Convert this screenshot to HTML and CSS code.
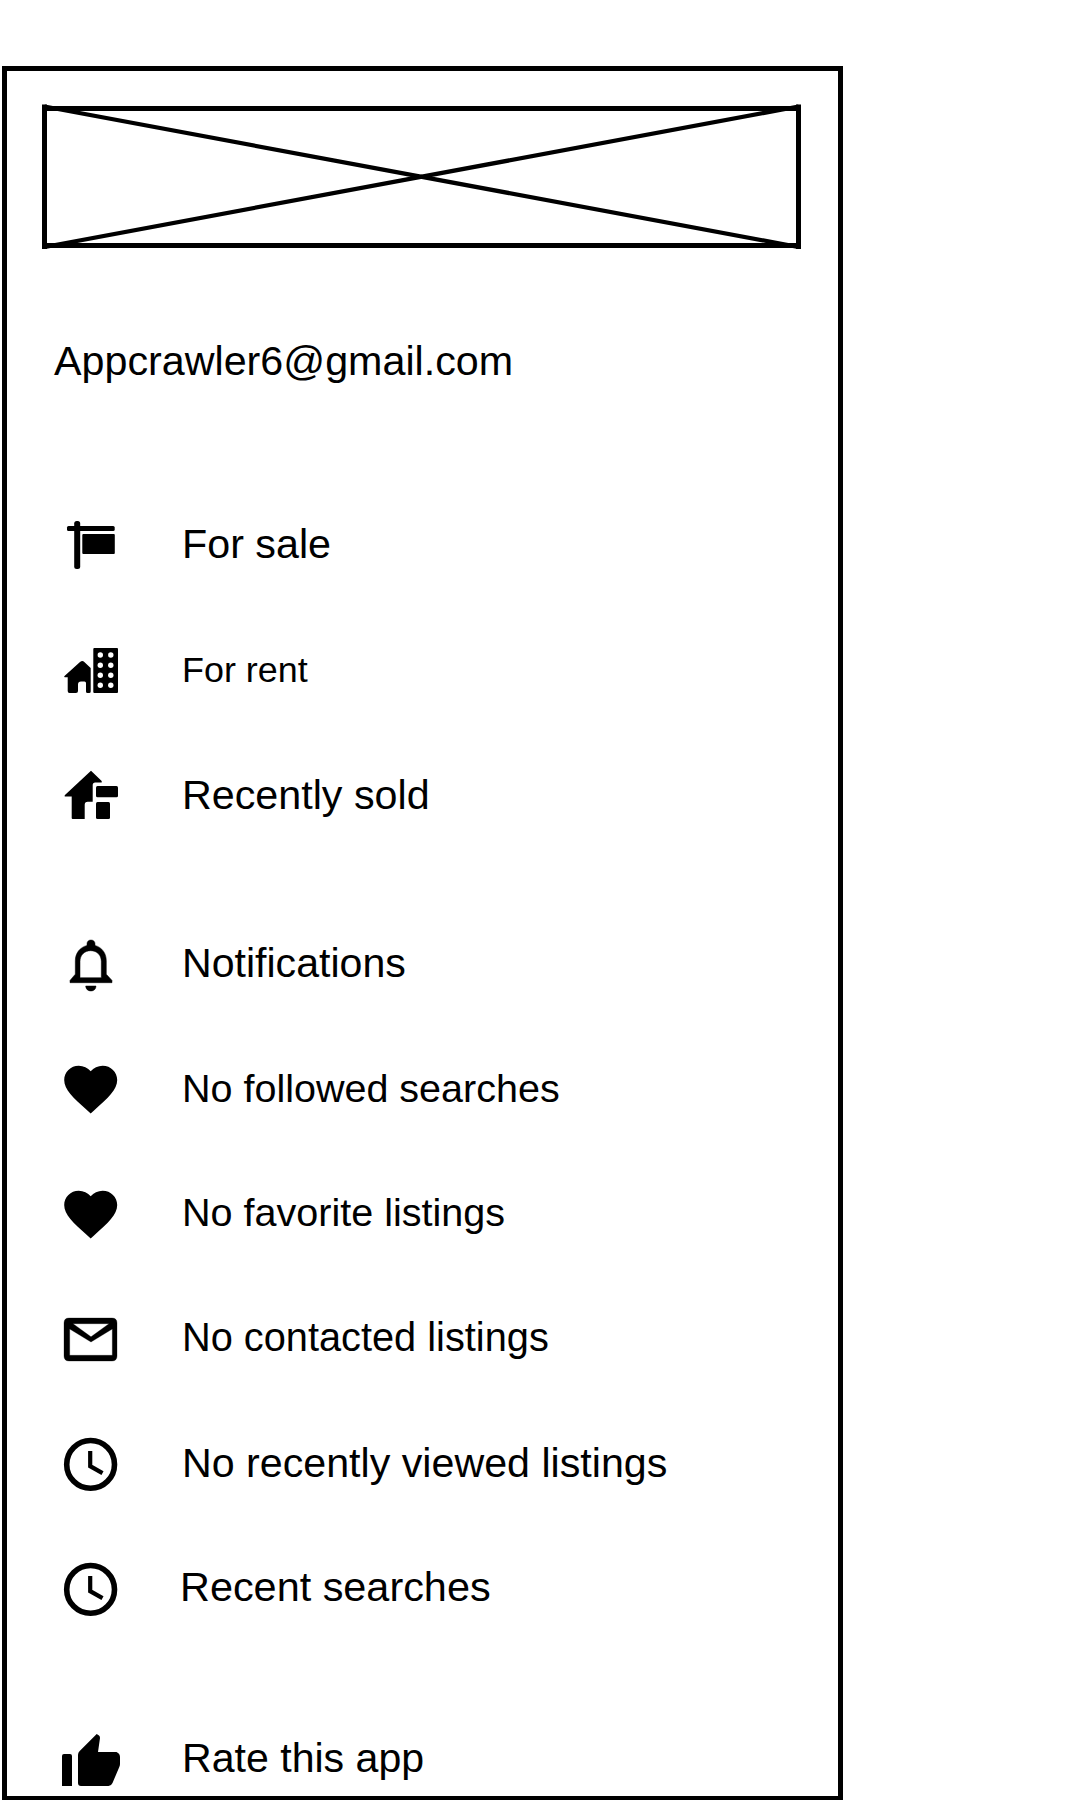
FILE: index.html
```html
<!DOCTYPE html>
<html lang="en">
<head>
<meta charset="utf-8">
<title>Menu</title>
<link rel="stylesheet" href="styles.css">
</head>
<body>
<svg class="defs" width="0" height="0" aria-hidden="true">
  <symbol id="heart" viewBox="0 0 80 80">
    <path transform="translate(8.9 8) scale(2.65 2.6)" d="M12 21.35l-1.45-1.32C5.4 15.36 2 12.28 2 8.5 2 5.42 4.42 3 7.5 3c1.74 0 3.41.81 4.5 2.09C13.09 3.81 14.76 3 16.5 3 19.58 3 22 5.42 22 8.5c0 3.78-3.4 6.86-8.55 11.54L12 21.35z"/>
  </symbol>
  <symbol id="clock" viewBox="0 0 80 80">
    <circle cx="40.6" cy="39.4" r="23.9" fill="none" stroke="#000" stroke-width="5.6"/>
    <path d="M40.2 26v15.200l12.300 7" fill="none" stroke="#000" stroke-width="4.200"/>
  </symbol>
</svg>
<main class="drawer">
  <svg class="banner" viewBox="0 0 759 145">
    <path class="frame" d="M0 4.500h759M0 141.500h759M2.500 .5v144.500M756.500 .5v144.500"/>
    <path class="cross" d="M2.500 2.500l754 140.500M2.500 143l754-140.500"/>
  </svg>
  <p class="email">Appcrawler6@gmail.com</p>
  <nav class="menu">
    <ul class="group">
      <li class="item">
        <svg class="icon" viewBox="0 0 80 80"><rect x="24.200" y="16" width="6" height="48" rx="2.500"/><rect x="17" y="20.900" width="47.700" height="5.200" rx="1.500"/><rect x="32.300" y="28.900" width="32.500" height="20" rx="1"/></svg>
        <span class="label for-sale">For sale</span>
      </li>
      <li class="item">
        <svg class="icon" viewBox="0 0 80 80"><rect x="43.300" y="18" width="24.700" height="45" rx="1"/><path d="M32.300 31q1 0 2 1l6.400 6v23.500q0 1.500-1.500 1.500h-1.700q-1.500 0-1.500-1.500V53q0-1.500-1.500-1.500H31q-3 0-3 3V61q0 2-2 2h-6.500q-1.800 0-1.800-2V47.300H15q-1.500 0-.5-1.200L30 32q1.300-1 2.300-1z"/><g fill="#fff"><circle cx="50.300" cy="25" r="2.700"/><circle cx="60.800" cy="25" r="2.700"/><circle cx="50.300" cy="35.300" r="2.700"/><circle cx="60.800" cy="35.300" r="2.700"/><circle cx="50.300" cy="45.300" r="2.700"/><circle cx="60.800" cy="45.300" r="2.700"/><circle cx="50.300" cy="55.300" r="2.700"/><circle cx="60.800" cy="55.300" r="2.700"/></g></svg>
        <span class="label for-rent">For rent</span>
      </li>
      <li class="item">
        <svg class="icon" viewBox="0 0 80 80"><path d="M41 15.700L51.700 26v1.500h-6.500q-2.500 0-2.500 2.500v16.700h-5q-3 0-3 3V64h-12q-1 0-1-1V41.500h-7v-1.200z"/><rect x="46" y="31" width="22" height="11.300" rx="1.500"/><rect x="46" y="47" width="14" height="17" rx="1.500"/></svg>
        <span class="label sold">Recently sold</span>
      </li>
    </ul>
    <ul class="group">
      <li class="item">
        <svg class="icon" viewBox="0 0 80 80"><path stroke="#000" stroke-width=".5" fill-rule="evenodd" d="M41 15c2.300 0 4 1.600 4 3.800v1.600c7.200 2 11.300 8 11.300 15.300v13.500l5.700 6.200v2.300H20v-2.300l5.300-6.200V35.700C25.300 28.300 29.700 22.400 37 20.400v-1.600C37 16.600 38.700 15 41 15zM40.700 25.700C34.500 25.700 30 30 30 36.500v16.200h21.300V36.500c0-6.500-4.300-10.800-10.600-10.800zM35.700 61H46c0 3-2.200 5-5.100 5s-5.200-2-5.200-5z"/></svg>
        <span class="label notifications">Notifications</span>
      </li>
      <li class="item">
        <svg class="icon"><use href="#heart"/></svg>
        <span class="label followed">No followed searches</span>
      </li>
      <li class="item">
        <svg class="icon"><use href="#heart"/></svg>
        <span class="label favorite">No favorite listings</span>
      </li>
      <li class="item">
        <svg class="icon" viewBox="0 0 80 80"><path stroke="#000" stroke-width=".3" fill-rule="evenodd" d="M19 18h43q5 0 5 5v33q0 5-5 5H19q-5 0-5-5V23q0-5 5-5zM19.700 29v26.300h42.600V29L41 42zM23 23.700L41 36.800l18-13.100z"/></svg>
        <span class="label contacted">No contacted listings</span>
      </li>
      <li class="item">
        <svg class="icon"><use href="#clock"/></svg>
        <span class="label viewed">No recently viewed listings</span>
      </li>
      <li class="item">
        <svg class="icon"><use href="#clock"/></svg>
        <span class="label recent">Recent searches</span>
      </li>
    </ul>
    <ul class="group">
      <li class="item">
        <svg class="icon" viewBox="0 0 80 80"><path d="M12 36q0-2 2-2h6q2 0 2 2v30H12zM28 35q0-2.300 1.700-4L46.700 14 49 15.500q1 .8 1 2.500L48 32h18.500q3.500 1.500 3.500 5v7q0 1.500-.7 3L62.500 63q-1.300 3-4 3H31q-3 0-3-3z"/></svg>
        <span class="label rate">Rate this app</span>
      </li>
    </ul>
  </nav>
</main>
</body>
</html>
```

FILE: styles.css
```css
html,
body {
  height: 1800px;
  margin: 0;
  overflow: hidden;
  background: #fff;
}

body {
  box-sizing: border-box;
  padding: 66px 0 0 2px;
  color: #000;
  font-family: "Liberation Sans", Arial, sans-serif;
}

.defs {
  display: none;
}

.drawer {
  box-sizing: border-box;
  width: 841px;
  height: 1735px;
  padding: 33px 35px 0;
  border: 5px solid #000;
}

.banner {
  display: block;
  width: 759px;
  height: 145px;
}

.frame,
.cross {
  fill: none;
  stroke: #000;
}

.frame {
  stroke-width: 5;
}

.cross {
  stroke-width: 4.2;
}

.email {
  margin: 82px 0 114px 12px;
  font-size: 41.25px;
  line-height: 60px;
}

.menu {
  display: flex;
  flex-direction: column;
  gap: 90px;
  margin-left: 8px;
}

.group {
  display: flex;
  flex-direction: column;
  gap: 45px;
  margin: 0;
  padding: 0;
  list-style: none;
}

.item {
  display: flex;
  align-items: center;
  gap: 52px;
  height: 80px;
}

.icon {
  flex: none;
  width: 80px;
  height: 80px;
}

.label {
  font-size: 41.25px;
  line-height: 60px;
  white-space: nowrap;
}

.for-sale {
  padding-bottom: 3px;
}

.for-rent {
  padding-bottom: 1px;
  font-size: 35.9px;
}

.notifications,
.viewed,
.rate {
  padding-bottom: 4px;
  font-size: 41.1px;
}

.viewed {
  font-size: 41.2px;
}

.followed {
  padding-bottom: 5px;
  font-size: 39.5px;
}

.favorite {
  padding-bottom: 7px;
  font-size: 39.55px;
}

.contacted {
  padding-bottom: 7px;
  font-size: 39.75px;
}

.recent {
  margin-left: -2px;
  padding-bottom: 7px;
  font-size: 41.4px;
}
```
